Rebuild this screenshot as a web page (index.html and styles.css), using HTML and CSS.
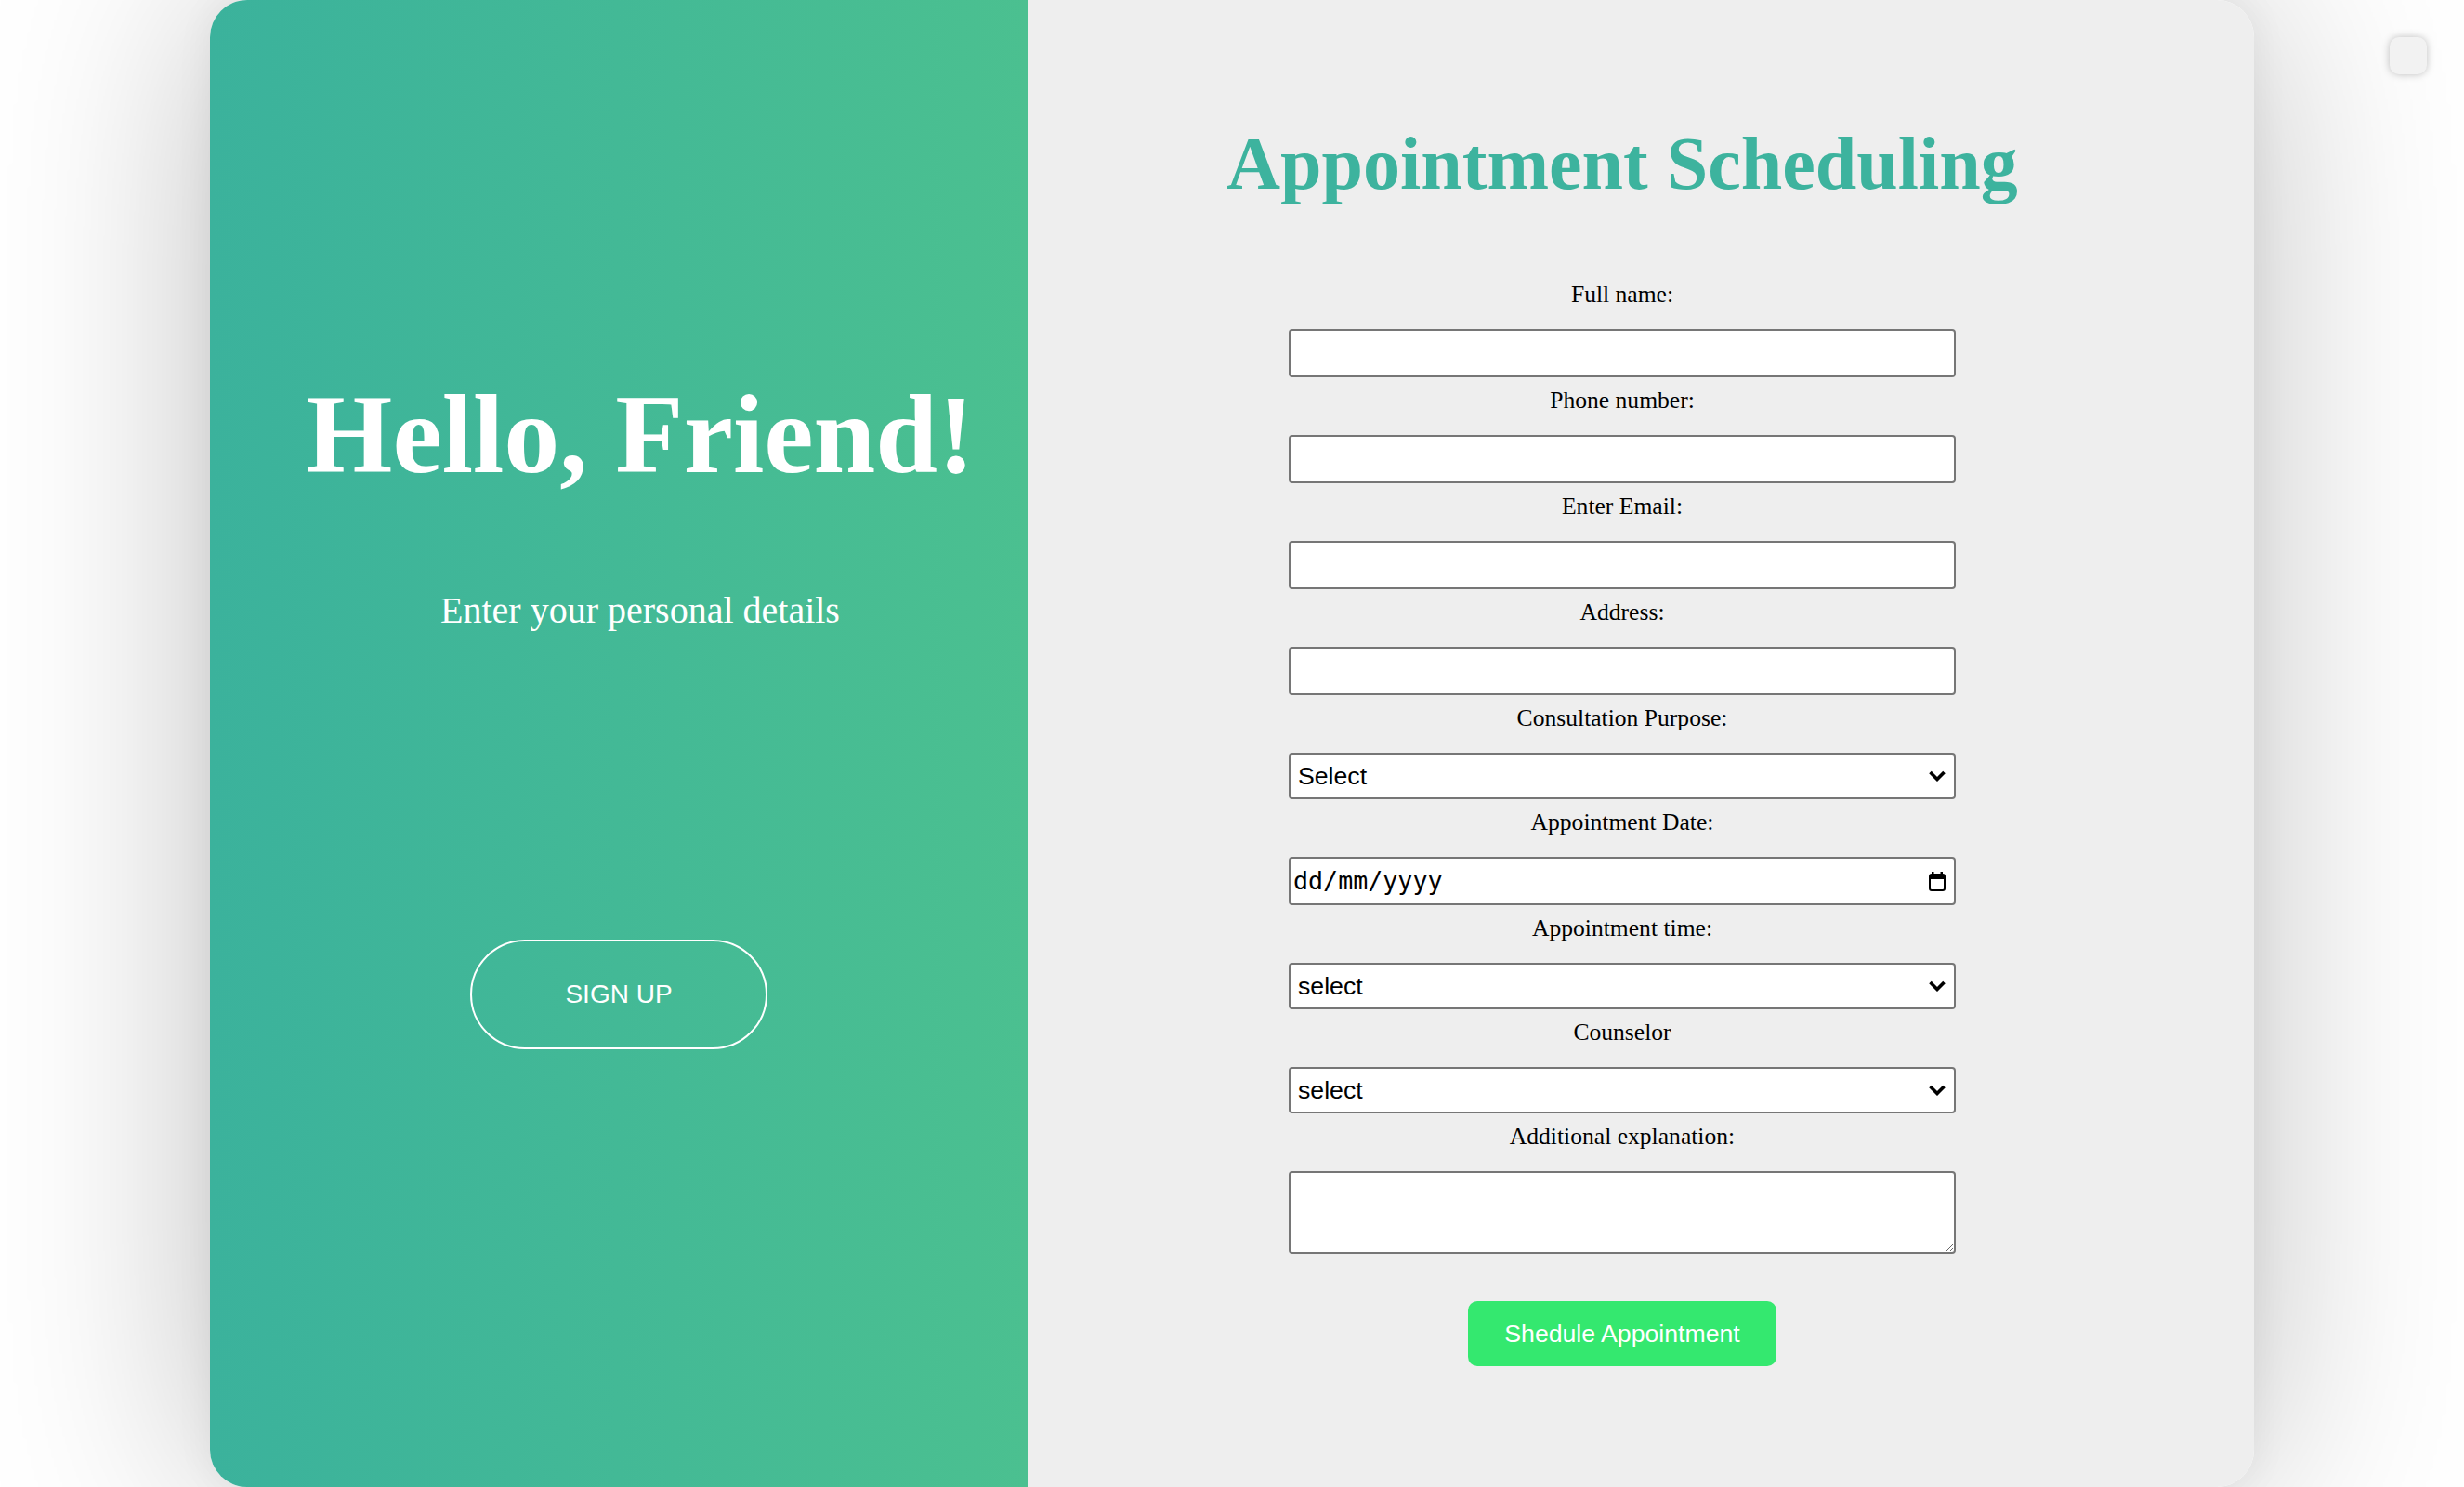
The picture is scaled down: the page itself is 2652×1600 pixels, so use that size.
FILE: index.html
```html
<!DOCTYPE html>
<html lang="en">
<head>
<meta charset="utf-8">
<title>Appointment Scheduling</title>
<link rel="stylesheet" href="styles.css">
</head>
<body>
<div class="page">
  <div class="card">
    <section class="left">
      <div class="intro">
        <h1>Hello, Friend!</h1>
        <p>Enter your personal details</p>
      </div>
      <button class="ghost" type="button">SIGN UP</button>
    </section>
    <section class="right">
      <h2>Appointment Scheduling</h2>
      <form class="form">
        <label for="fn">Full name:</label>
        <input class="field" id="fn" type="text">
        <label for="ph">Phone number:</label>
        <input class="field" id="ph" type="text">
        <label for="em">Enter Email:</label>
        <input class="field" id="em" type="text">
        <label for="ad">Address:</label>
        <input class="field" id="ad" type="text">
        <label for="cp">Consultation Purpose:</label>
        <div class="sel-wrap">
          <select class="field sel" id="cp"><option>Select</option></select>
          <svg class="chev" width="20" height="12" viewBox="0 0 20 12"><path d="M2.5 2 L10 9.5 L17.5 2" fill="none" stroke="#000" stroke-width="3.6"/></svg>
        </div>
        <label>Appointment Date:</label>
        <div class="field date"><span>dd/mm/yyyy</span><svg class="cal" width="20" height="22" viewBox="0 0 20 22"><rect x="2" y="4" width="16" height="17" rx="2" fill="none" stroke="#000" stroke-width="2"/><rect x="2" y="4" width="16" height="5" fill="#000"/><rect x="4" y="1" width="2.5" height="4" fill="#000"/><rect x="13.5" y="1" width="2.5" height="4" fill="#000"/></svg></div>
        <label for="at">Appointment time:</label>
        <div class="sel-wrap">
          <select class="field sel" id="at"><option>select</option></select>
          <svg class="chev" width="20" height="12" viewBox="0 0 20 12"><path d="M2.5 2 L10 9.5 L17.5 2" fill="none" stroke="#000" stroke-width="3.6"/></svg>
        </div>
        <label for="co">Counselor</label>
        <div class="sel-wrap">
          <select class="field sel" id="co"><option>select</option></select>
          <svg class="chev" width="20" height="12" viewBox="0 0 20 12"><path d="M2.5 2 L10 9.5 L17.5 2" fill="none" stroke="#000" stroke-width="3.6"/></svg>
        </div>
        <label for="ae">Additional explanation:</label>
        <textarea class="field area" id="ae"></textarea>
        <button class="submit" type="button">Shedule Appointment</button>
      </form>
    </section>
  </div>
</div>
<div class="widget"></div>
</body>
</html>
```

FILE: styles.css
```css
html, body {
  margin: 0;
  padding: 0;
  background: #ffffff;
}

body {
  font-family: "Liberation Serif", "Times New Roman", serif;
  overflow: hidden;
}

.page {
  height: 1600px;
  display: flex;
  justify-content: center;
}

.card {
  width: 2200px;
  height: 1600px;
  border-radius: 40px;
  overflow: hidden;
  display: flex;
  box-shadow: 0 0 240px rgba(0, 0, 0, 0.26), 0 0 40px rgba(0, 0, 0, 0.06);
}

.left {
  flex: 0 0 880px;
  box-sizing: border-box;
  background: linear-gradient(to right, #3bb29c, #4bc090);
  display: flex;
  flex-direction: column;
  align-items: center;
  padding-top: 398.5px;
  color: #ffffff;
}

.intro {
  align-self: stretch;
  padding-left: 46px;
  text-align: center;
}

.intro h1 {
  margin: 0;
  font-size: 120px;
  line-height: 138px;
  font-weight: bold;
}

.intro p {
  margin: 97px 0 0;
  font-size: 40px;
  line-height: 46px;
}

.ghost {
  margin-top: 331.5px;
  width: 320px;
  height: 118px;
  padding: 0;
  border: 2px solid #ffffff;
  border-radius: 59px;
  background: transparent;
  color: #ffffff;
  font-family: "Liberation Sans", Arial, sans-serif;
  font-size: 28px;
}

.right {
  flex: 1;
  box-sizing: border-box;
  background: #eeeeee;
  padding: 130px 40px 0 0;
}

.right h2 {
  margin: 0;
  text-align: center;
  color: #3db39e;
  font-size: 80px;
  line-height: 92px;
  font-weight: bold;
}

.form {
  margin: 80.4px 0 0;
}

.form label {
  display: block;
  text-align: center;
  font-size: 25.6px;
  line-height: 30px;
  margin-bottom: 22px;
  color: #000000;
}

.field {
  display: block;
  box-sizing: border-box;
  width: 718px;
  height: 52px;
  margin: 0 auto 9.8px;
  border: 2px solid #767676;
  border-radius: 4px;
  background: #ffffff;
  color: #000000;
  font-family: "Liberation Sans", Arial, sans-serif;
  font-size: 26.67px;
}

.sel-wrap {
  position: relative;
  width: 718px;
  margin: 0 auto 9.8px;
}

.sel {
  -webkit-appearance: none;
  appearance: none;
  height: 50.5px;
  margin: 0;
  padding: 0 40px 0 8px;
}

.chev {
  position: absolute;
  right: 10px;
  top: 19.5px;
  pointer-events: none;
}

.date {
  display: flex;
  align-items: center;
  justify-content: space-between;
  padding: 0 8px 0 3px;
  font-family: "DejaVu Sans Mono", "Liberation Mono", monospace;
  font-size: 26.67px;
}

.cal {
  display: block;
}

.area {
  height: 89px;
}

.submit {
  display: block;
  margin: 51px auto 0;
  width: 332px;
  height: 70px;
  border: none;
  border-radius: 10px;
  background: #34e86f;
  color: #ffffff;
  font-family: "Liberation Sans", Arial, sans-serif;
  font-size: 26.67px;
}

.widget {
  position: fixed;
  top: 40px;
  left: 2572px;
  width: 40px;
  height: 40px;
  border-radius: 10px;
  background: #f2f2f2;
  box-shadow: 0 0 8px rgba(0, 0, 0, 0.25);
}
```
